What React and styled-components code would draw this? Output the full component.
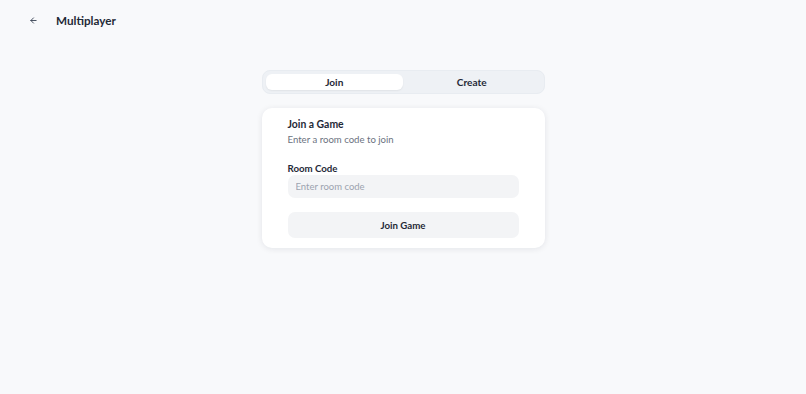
import React, { useState } from "react";
import styled, { createGlobalStyle } from "styled-components";

const GlobalStyle = createGlobalStyle`
  html, body {
    margin: 0;
    padding: 0;
    background: #f8f9fb;
    font-family: "Lato", "Open Sans", sans-serif;
    color: #1f2937;
  }
`;

const Page = styled.div`
  min-height: 394px;
  background: #f8f9fb;
`;

const Header = styled.div`
  display: flex;
  align-items: center;
  height: 40px;
  padding-left: 27px;
  gap: 17px;
`;

const BackButton = styled.button`
  display: flex;
  align-items: center;
  justify-content: center;
  width: 12px;
  height: 12px;
  padding: 0;
  border: none;
  background: none;
  color: #374151;
  cursor: pointer;
`;

const Title = styled.h1`
  margin: 0;
  font-size: 11.7px;
  font-weight: 700;
  color: #1f2937;
`;

const Main = styled.div`
  display: flex;
  flex-direction: column;
  width: 283px;
  margin: 30px auto 0;
  gap: 14px;
`;

const TabList = styled.div`
  display: grid;
  grid-template-columns: 1fr 1fr;
  height: 24px;
  padding: 3px;
  box-sizing: border-box;
  border-radius: 8px;
  background: #eef1f5;
  border: 1px solid #e8ecf1;
`;

const Tab = styled.button`
  border: none;
  border-radius: 6px;
  font-family: inherit;
  font-size: 10.1px;
  font-weight: 700;
  color: #1f2937;
  background: ${(p) => (p.active ? "#ffffff" : "transparent")};
  box-shadow: ${(p) => (p.active ? "0 1px 2px rgba(0,0,0,0.06)" : "none")};
  cursor: pointer;
  padding: 0;
`;

const Card = styled.div`
  display: flex;
  flex-direction: column;
  background: #ffffff;
  border-radius: 10px;
  padding: 9px 26px 10px;
  box-shadow: 0 1px 6px rgba(15, 23, 42, 0.09);
`;

const CardTitle = styled.div`
  font-size: 10.4px;
  font-weight: 700;
  color: #1f2937;
  line-height: 14px;
`;

const CardDesc = styled.div`
  font-size: 9.6px;
  color: #6b7280;
  line-height: 14px;
  margin-top: 2px;
`;

const Label = styled.label`
  font-size: 9.7px;
  font-weight: 700;
  color: #1f2937;
  margin-top: 15px;
  line-height: 12px;
`;

const Input = styled.input`
  margin-top: 1px;
  height: 23px;
  box-sizing: border-box;
  border: none;
  border-radius: 7px;
  background: #f3f4f6;
  padding: 0 8px;
  font-family: inherit;
  font-size: 9.5px;
  color: #1f2937;
  outline: none;
  &::placeholder {
    color: #9ca3af;
  }
`;

const SubmitButton = styled.button`
  margin-top: 14px;
  height: 26px;
  border: none;
  border-radius: 7px;
  background: #f3f4f6;
  font-family: inherit;
  font-size: 9.7px;
  font-weight: 700;
  color: #1f2937;
  cursor: pointer;
`;

export default function App() {
  const [tab, setTab] = useState("join");
  return (
    <>
      <GlobalStyle />
      <Page>
        <Header>
          <BackButton aria-label="Back">
            <svg width="9" height="9" viewBox="0 0 24 24" fill="none" stroke="currentColor" strokeWidth="2.4" strokeLinecap="round" strokeLinejoin="round">
              <path d="M19 12H5" />
              <path d="M12 19l-7-7 7-7" />
            </svg>
          </BackButton>
          <Title>Multiplayer</Title>
        </Header>
        <Main>
          <TabList>
            <Tab active={tab === "join"} onClick={() => setTab("join")}>Join</Tab>
            <Tab active={tab === "create"} onClick={() => setTab("create")}>Create</Tab>
          </TabList>
          <Card>
            <CardTitle>Join a Game</CardTitle>
            <CardDesc>Enter a room code to join</CardDesc>
            <Label>Room Code</Label>
            <Input placeholder="Enter room code" />
            <SubmitButton>Join Game</SubmitButton>
          </Card>
        </Main>
      </Page>
    </>
  );
}
